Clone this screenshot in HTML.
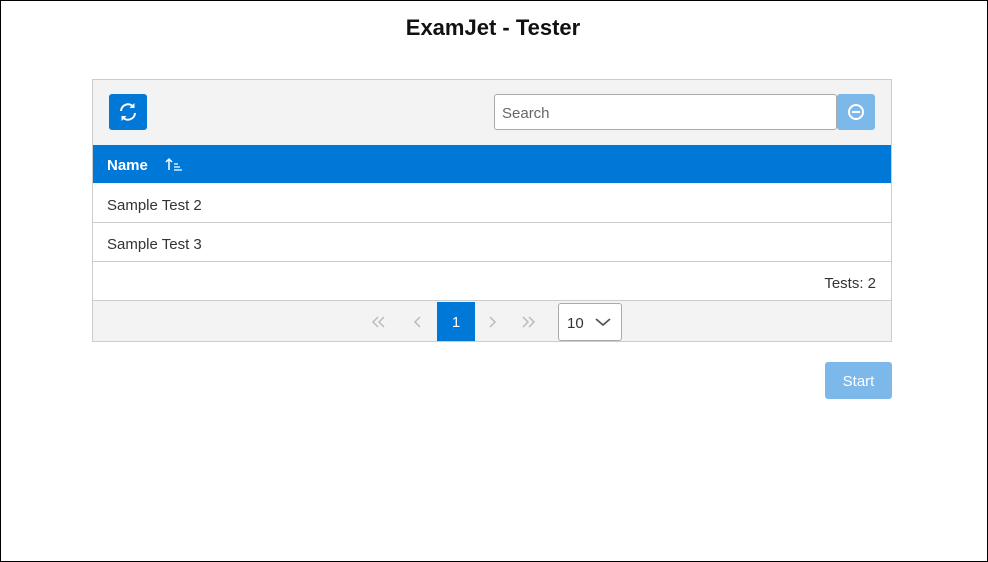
<!DOCTYPE html>
<html><head><style>
*{box-sizing:border-box;margin:0;padding:0}
body{width:988px;height:562px;background:#fff;font-family:"Liberation Sans",sans-serif;position:relative;overflow:hidden}
.abs{position:absolute}
.frame{position:absolute;left:0;top:0;width:988px;height:562px;border:1px solid #000}
h1{position:absolute;left:0;width:986px;top:15px;text-align:center;font-size:22px;font-weight:bold;color:#111}
.grid{left:92px;top:79px;width:800px;height:263px;border:1px solid #ccc;background:#f3f3f3}
.row{position:absolute;left:0;width:798px;height:39px;background:#fff;border-bottom:1px solid #ccc;font-size:15px;color:#333;padding:13px 14px 0}
</style></head><body>
<div class="frame"></div>
<h1>ExamJet - Tester</h1>
<div class="abs grid">
 <div class="abs" style="left:16px;top:14px;width:38px;height:36px;background:#0078d7;border-radius:3px">
  <svg width="38" height="36" viewBox="0 0 38 36"><g fill="none" stroke="#fff" stroke-width="2"><path d="M12 17a7 7 0 0 1 12.5-4"/><path d="M26 19a7 7 0 0 1-12.5 4"/></g><path d="M25.5 9v5h-5z" fill="#fff"/><path d="M12.5 27v-5h5z" fill="#fff"/></svg>
 </div>
 <div class="abs" style="left:401px;top:14px;width:343px;height:36px;background:#fff;border:1px solid #aaa;border-radius:3px;font-size:15px;color:#666;padding:10px 7px 0">Search</div>
 <div class="abs" style="left:744px;top:14px;width:38px;height:36px;background:#7db8ea;border-radius:3px">
  <svg width="38" height="36"><circle cx="19" cy="18" r="7" fill="none" stroke="#fff" stroke-width="2"/><path d="M15 18h8" stroke="#fff" stroke-width="2"/></svg>
 </div>
 <div class="abs" style="left:0;top:65px;width:798px;height:38px;background:#0078d7;color:#fff;font-weight:bold;font-size:15px;padding:12px 14px 0">Name
  <svg class="abs" style="left:72px;top:12px" width="18" height="14"><path d="M4 13V2M1 5l3-3 3 3" stroke="#fff" stroke-width="1.5" fill="none"/><path d="M9 7h4M9 10h6M9 13h8" stroke="#fff" stroke-width="1.3"/></svg>
 </div>
 <div class="row" style="top:104px">Sample Test 2</div>
 <div class="row" style="top:143px">Sample Test 3</div>
 <div class="row" style="top:182px;text-align:right;padding-right:15px">Tests: 2</div>
 <svg class="abs" style="left:270px;top:234px" width="140" height="16"><g fill="none" stroke="#bbb" stroke-width="1.5"><path d="M15 3l-5 5 5 5M21 3l-5 5 5 5"/><path d="M57 3l-5 5 5 5"/></g></svg>
 <svg class="abs" style="left:380px;top:234px" width="80" height="16"><g fill="none" stroke="#bbb" stroke-width="1.5"><path d="M17 3l5 5-5 5"/><path d="M50 3l5 5-5 5M56 3l5 5-5 5"/></g></svg>
 <div class="abs" style="left:344px;top:222px;width:38px;height:39px;background:#0078d7;color:#fff;font-size:15px;text-align:center;line-height:41px">1</div>
 <div class="abs" style="left:465px;top:223px;width:64px;height:38px;background:#fff;border:1px solid #aaa;border-radius:3px;font-size:15px;color:#333;padding:11px 8px 0">10
  <svg class="abs" style="left:36px;top:13px" width="16" height="10"><path d="M1 2l7 6 7-6" stroke="#555" stroke-width="1.8" fill="none"/></svg>
 </div>
</div>
<div class="abs" style="left:825px;top:362px;width:67px;height:37px;background:#7db8ea;border-radius:3px;color:#fff;font-size:15px;text-align:center;line-height:39px">Start</div>
</body></html>
